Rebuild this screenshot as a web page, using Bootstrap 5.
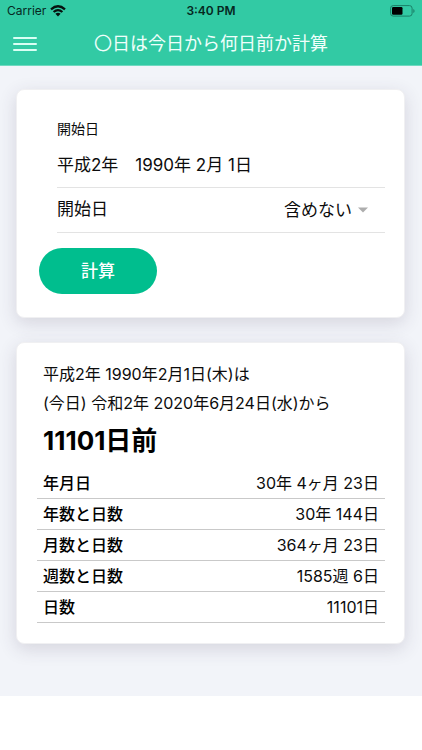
<!DOCTYPE html>
<html lang="ja">
<head>
<meta charset="utf-8">
<meta name="viewport" content="width=device-width, initial-scale=1">
<title>〇日は今日から何日前か計算</title>
<link href="https://cdn.jsdelivr.net/npm/bootstrap@5.3.0/dist/css/bootstrap.min.css" rel="stylesheet">
<style>
  body { font-family: Inter, "Noto Sans CJK JP", sans-serif; font-size: 17px; color: #0c0c0c; background: #fff; }
  .app-header { background: #32caa4; border-bottom: 1px solid #6fd9c0; }
  .status-bar { height: 22px; font-size: 12px; line-height: 22px; color: #06281f; padding: 0 7px; }
  .status-bar > * { flex: 1 1 0; }
  .status-time { font-weight: 600; text-align: center; }
  .title-bar { height: 43px; padding: 1px 11px 0; }
  .title-bar > .side { width: 28px; }
  .title-bar h1 { font-size: 18px; line-height: 24px; font-weight: 400; color: #effffb; }
  .menu-btn { line-height: 0; }
  .app-main { background: #f2f4f9; padding: 23px 17px 52px 16px; }
  .panel { border: 1px solid #f0f0f2; border-radius: 8px; box-shadow: 0 5px 18px rgba(60, 50, 80, .16); }
  .form-panel { padding: 28px 19px 23px 22px; }
  .result-panel { padding: 17px 19px 20px 20px; }
  .fields { padding-left: 18px; }
  .fields label.caption { font-size: 14px; line-height: 22px; margin-bottom: 3px; }
  .field-line { height: 45px; border-bottom: 1px solid #e3e3e3; }
  .field-line input, .field-line select { border: 0; padding: 0; background: transparent; color: inherit; font-size: 17px; line-height: 26px; }
  .field-line input { width: 100%; }
  .field-line select { appearance: none; text-align: right; }
  .picker { gap: 6px; padding-right: 17px; }
  .calc-btn { width: 118px; height: 46px; margin-top: 15px; border-radius: 23px; background: #00be8e; color: #fff; font-size: 17px; font-weight: 500; padding: 2px 0 0; }
  .calc-btn:hover, .calc-btn:active { background: #00a97e !important; color: #fff !important; }
  .summary { font-size: 16px; line-height: 29px; padding-left: 6px; }
  .answer { font-size: 26px; line-height: 36px; font-weight: 700; padding-left: 6px; color: #000; margin: 5px 0 9px; }
  .result-table { font-size: 16px; line-height: 24px; color: #0c0c0c; }
  .result-table th, .result-table td { padding: 3px 6px; border-bottom: 1px solid #c9c9c9; color: inherit; }
  .result-table th { font-weight: 500; color: #000; }
</style>
<script src="https://cdn.jsdelivr.net/npm/bootstrap@5.3.0/dist/js/bootstrap.bundle.min.js" defer></script>
</head>
<body>
<header class="app-header">
  <div class="status-bar d-flex align-items-center">
    <div class="d-flex align-items-center gap-1">
      <span>Carrier</span>
      <svg width="16" height="12" viewBox="0 0 16 12" role="img" aria-label="Wi-Fi">
        <g fill="none" stroke="#06120f" stroke-width="2.3"><path d="M1 4.3Q8-1.7 15 4.3"/><path d="M3.6 7Q8 3.2 12.4 7"/></g>
        <path d="M5.4 8.8Q8 6.6 10.6 8.8L8 11.5Z" fill="#06120f"/>
      </svg>
    </div>
    <div class="status-time">3:40 PM</div>
    <div class="d-flex justify-content-end">
      <svg width="25" height="12" viewBox="0 0 25 12" role="img" aria-label="バッテリー">
        <rect x=".6" y=".6" width="21.5" height="10.5" rx="2.6" fill="none" stroke="#1b7f67"/>
        <rect x="2" y="2" width="10.5" height="7.8" rx="1.2" fill="#000"/>
        <path d="M23.3 4v4q1.3-.5 1.3-2t-1.3-2z" fill="#1b7f67"/>
      </svg>
    </div>
  </div>
  <div class="title-bar d-flex align-items-center justify-content-between">
    <button type="button" class="menu-btn side btn p-0 border-0" aria-label="メニュー">
      <svg width="26" height="16" viewBox="0 0 26 16"><path d="M2 2h22M2 8h22M2 14h22" stroke="#d9fff4" stroke-width="2" stroke-linecap="round"/></svg>
    </button>
    <h1 class="m-0 text-nowrap">〇日は今日から何日前か計算</h1>
    <div class="side"></div>
  </div>
</header>

<main class="app-main d-flex flex-column gap-4">
  <form class="panel form-panel bg-white">
    <div class="fields">
      <label class="caption d-block" for="start-date">開始日</label>
      <div class="field-line d-flex align-items-center">
        <input id="start-date" type="text" value="平成2年　1990年 2月 1日">
      </div>
      <div class="field-line d-flex align-items-center justify-content-between">
        <label for="include-start">開始日</label>
        <div class="picker d-flex align-items-center">
          <select id="include-start"><option>含めない</option></select>
          <svg width="10" height="6" viewBox="0 0 10 6" aria-hidden="true"><path d="M0 .5h10L5 5.5z" fill="#adadad"/></svg>
        </div>
      </div>
    </div>
    <button type="button" class="calc-btn btn border-0">計算</button>
  </form>

  <section class="panel result-panel bg-white">
    <p class="summary m-0">平成2年 1990年2月1日(木)は<br>(今日) 令和2年 2020年6月24日(水)から</p>
    <h2 class="answer">11101日前</h2>
    <table class="result-table w-100">
      <tbody>
        <tr><th scope="row">年月日</th><td class="text-end">30年 4ヶ月 23日</td></tr>
        <tr><th scope="row">年数と日数</th><td class="text-end">30年 144日</td></tr>
        <tr><th scope="row">月数と日数</th><td class="text-end">364ヶ月 23日</td></tr>
        <tr><th scope="row">週数と日数</th><td class="text-end">1585週 6日</td></tr>
        <tr><th scope="row">日数</th><td class="text-end">11101日</td></tr>
      </tbody>
    </table>
  </section>
</main>
</body>
</html>
